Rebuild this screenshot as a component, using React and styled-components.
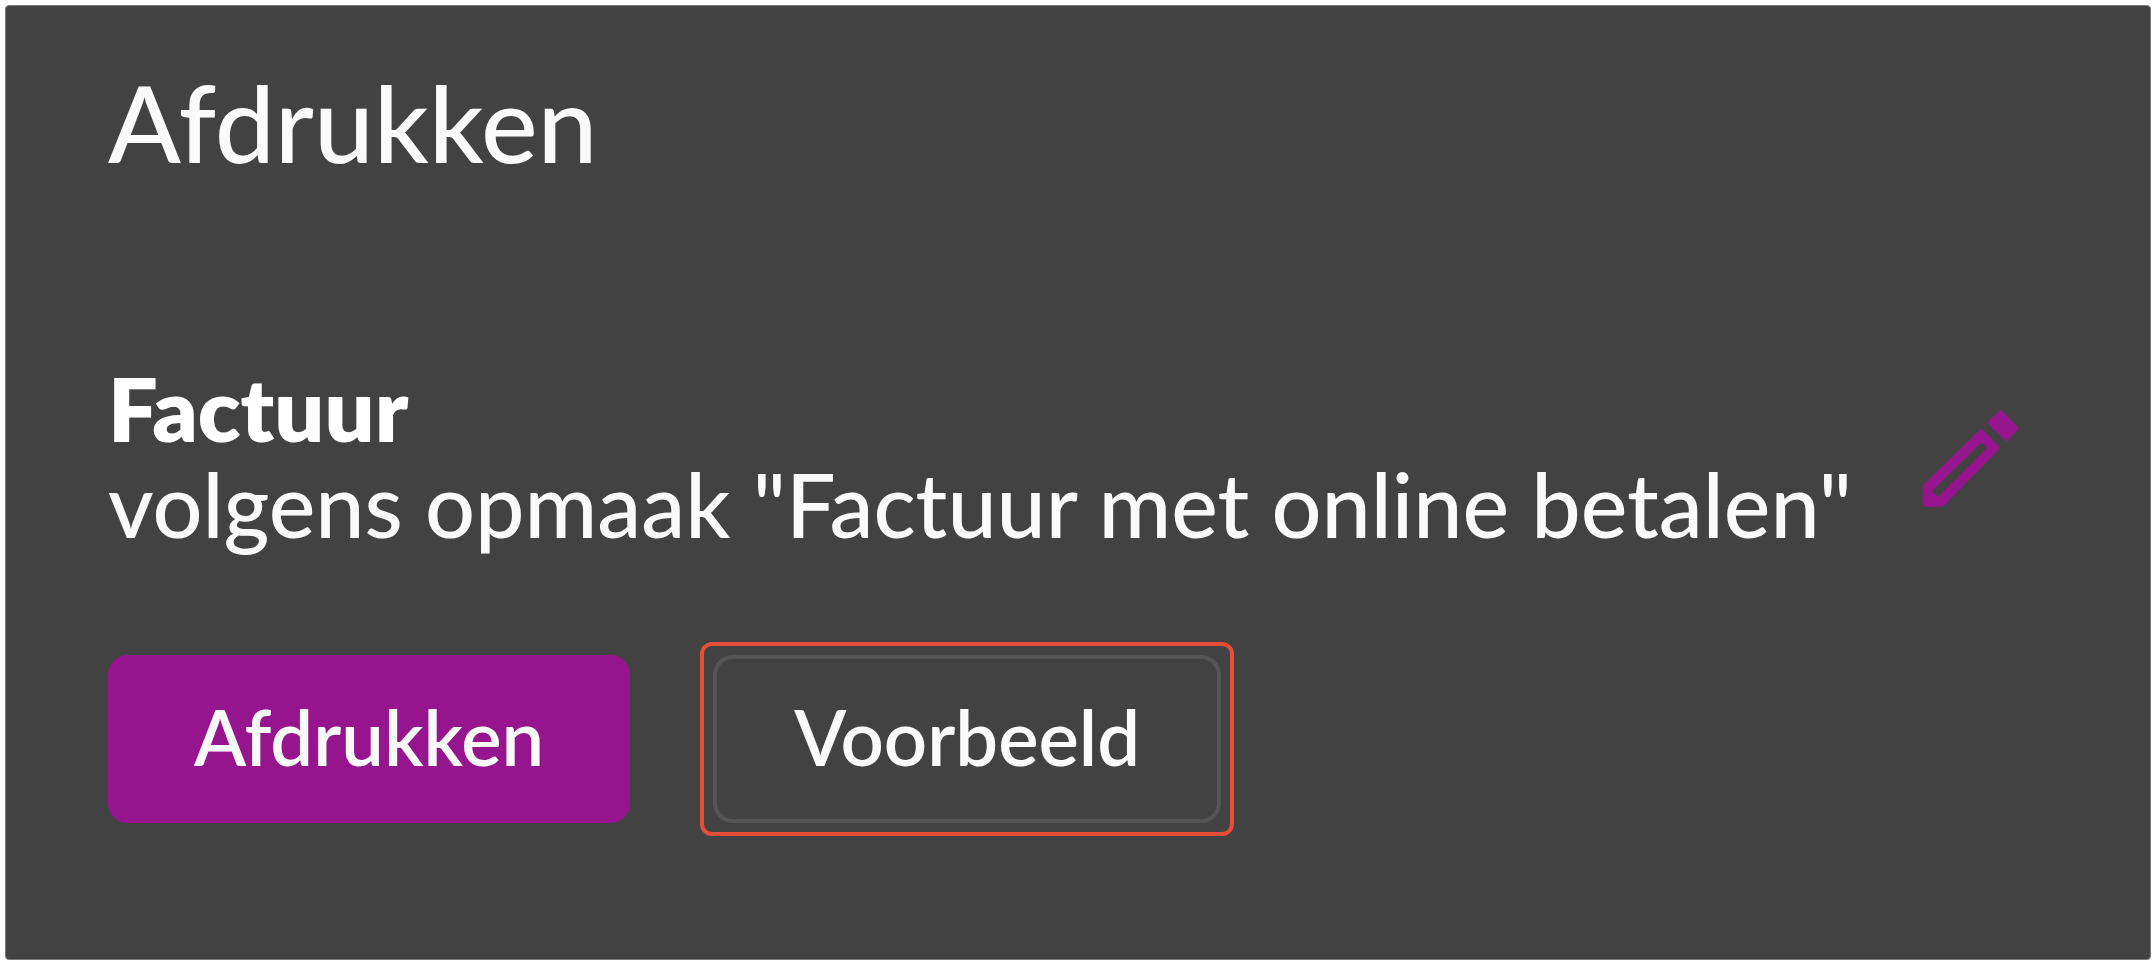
import React from "react";
import styled, { createGlobalStyle } from "styled-components";

const GlobalStyle = createGlobalStyle`
  *, *::before, *::after { box-sizing: border-box; }
  body {
    margin: 0;
    background: #ffffff;
    font-family: Lato, "Open Sans", sans-serif;
  }
  button { font: inherit; cursor: pointer; }
`;

const Page = styled.main`
  min-height: 100vh;
  padding: 5px;
  display: flex;
`;

const Panel = styled.section`
  flex: 1;
  min-width: 0;
  padding: 52px 100px 120px 102px;
  border: 1px solid #7c7c7c;
  border-radius: 4px;
  background: #424242;
  color: #fafafa;
`;

const Title = styled.h1`
  margin: 0 0 174px;
  font-size: 107px;
  font-weight: 500;
  line-height: 128px;
`;

const LayoutRow = styled.div`
  display: flex;
  align-items: center;
  gap: 70px;
  margin-bottom: 90px;
`;

const Description = styled.p`
  margin: 0;
  font-size: 88px;
  font-weight: 500;
  line-height: 96px;
`;

const DocumentName = styled.strong`
  display: block;
  font-weight: 800;
  color: #ffffff;
`;

const IconButton = styled.button`
  display: flex;
  padding: 4px 0 0;
  border: 0;
  background: transparent;
  color: #96158e;
`;

const Actions = styled.div`
  display: flex;
  align-items: center;
  gap: 70px;
`;

const ActionButton = styled.button`
  height: 168px;
  padding: 0 ${(p) => (p.$primary ? 82 : 77)}px 4px;
  border: 4px solid ${(p) => (p.$primary ? "#96158e" : "#555555")};
  border-radius: 20px;
  background: ${(p) => (p.$primary ? "#96158e" : "transparent")};
  color: #fafafa;
  font-size: 76px;
  font-weight: 600;
  line-height: 96px;
`;

const Highlight = styled.div`
  display: flex;
  padding: 9px;
  border: 4px solid #e64e3a;
  border-radius: 12px;
`;

function PencilIcon() {
  return (
    <svg width="97" height="97" viewBox="0 0 291 291" fill="currentColor" aria-hidden="true">
      <path
        fillRule="evenodd"
        d="M178 55 L235 114 L68 285 Q63 290 56 290 L8 290 Q2 290 2 284 L2 232 Q2 226 7 221 Z M174 101 L33 241 L33 247 L43 257 L51 257 L192 116 Q192 108 187 104 Q181 99 174 101 Z"
      />
      <path d="M230 3 Q235 -2 240 3 L287 50 Q292 55 287 60 L253 95 L195 38 Z" />
    </svg>
  );
}

export default function App() {
  return (
    <>
      <GlobalStyle />
      <Page>
        <Panel>
          <Title>Afdrukken</Title>
          <LayoutRow>
            <Description>
              <DocumentName>Factuur</DocumentName>
              volgens opmaak "Factuur met online betalen"
            </Description>
            <IconButton type="button" aria-label="Opmaak wijzigen">
              <PencilIcon />
            </IconButton>
          </LayoutRow>
          <Actions>
            <ActionButton type="button" $primary>Afdrukken</ActionButton>
            <Highlight>
              <ActionButton type="button">Voorbeeld</ActionButton>
            </Highlight>
          </Actions>
        </Panel>
      </Page>
    </>
  );
}
